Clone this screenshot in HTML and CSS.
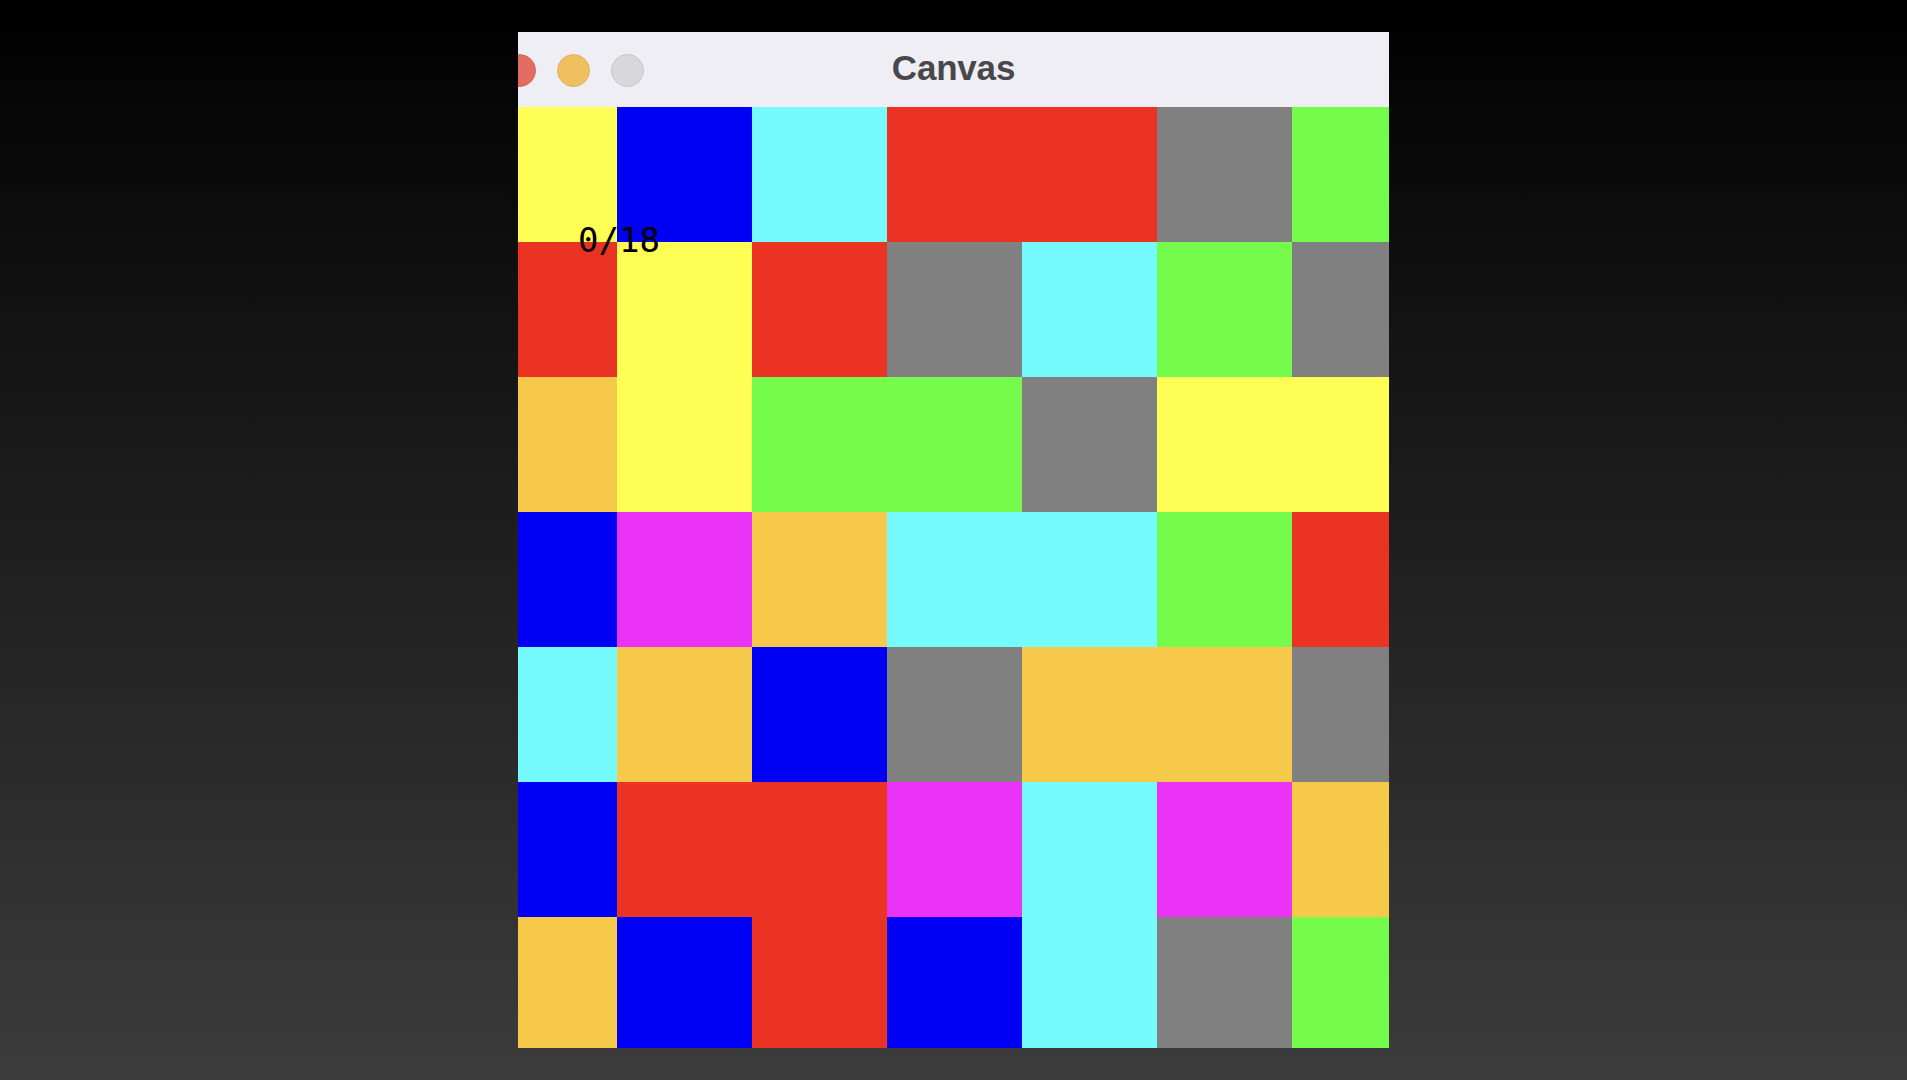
FILE: index.html
```html
<!DOCTYPE html>
<html lang="en">
<head>
<meta charset="utf-8">
<title>Canvas</title>
<link rel="stylesheet" href="styles.css">
</head>
<body>
<div class="window">
  <div class="titlebar">
    <div class="lights">
      <span class="light close"></span>
      <span class="light min"></span>
      <span class="light max"></span>
    </div>
    <div class="title">Canvas</div>
    <div></div>
  </div>
  <div class="canvas">
    <div class="grid">
      <div class="cell y"></div><div class="cell b"></div><div class="cell c"></div><div class="cell r"></div><div class="cell r"></div><div class="cell g"></div><div class="cell l"></div>
      <div class="cell r"></div><div class="cell y"></div><div class="cell r"></div><div class="cell g"></div><div class="cell c"></div><div class="cell l"></div><div class="cell g"></div>
      <div class="cell o"></div><div class="cell y"></div><div class="cell l"></div><div class="cell l"></div><div class="cell g"></div><div class="cell y"></div><div class="cell y"></div>
      <div class="cell b"></div><div class="cell m"></div><div class="cell o"></div><div class="cell c"></div><div class="cell c"></div><div class="cell l"></div><div class="cell r"></div>
      <div class="cell c"></div><div class="cell o"></div><div class="cell b"></div><div class="cell g"></div><div class="cell o"></div><div class="cell o"></div><div class="cell g"></div>
      <div class="cell b"></div><div class="cell r"></div><div class="cell r"></div><div class="cell m"></div><div class="cell c"></div><div class="cell m"></div><div class="cell o"></div>
      <div class="cell o"></div><div class="cell b"></div><div class="cell r"></div><div class="cell b"></div><div class="cell c"></div><div class="cell g"></div><div class="cell l"></div>
    </div>
    <div class="score">0/18</div>
  </div>
</div>
</body>
</html>
```

FILE: styles.css
```css
html, body {
  margin: 0;
  padding: 0;
}
body {
  width: 1907px;
  height: 1080px;
  overflow: hidden;
  background: linear-gradient(180deg, #000000 0%, #161616 35%, #2a2a2a 70%, #3c3c3c 100%);
  padding: 32px 0 0 518px;
  box-sizing: border-box;
  font-family: "Liberation Sans", Arial, sans-serif;
}
.window {
  width: 871px;
  height: 1016px;
  overflow: hidden;
  background: #efeef4;
  display: flex;
  flex-direction: column;
}
.titlebar {
  height: 75px;
  flex: none;
  display: grid;
  grid-template-columns: 1fr auto 1fr;
  align-items: center;
  background: #efeef4;
}
.lights {
  display: flex;
  gap: 21px;
  margin-left: -15px;
  margin-top: 1px;
}
.light {
  width: 33px;
  height: 33px;
  border-radius: 50%;
  box-sizing: border-box;
}
.close { background: #e16c61; border: 1px solid #d2665c; }
.min { background: #efbf5d; border: 1px solid #e0b158; }
.max { background: #d8d7dc; border: 1px solid #c4c3c8; }
.title {
  font-weight: bold;
  font-size: 35px;
  color: #48484a;
  letter-spacing: -0.2px;
  margin-top: -3px;
}
.canvas {
  position: relative;
  flex: 1;
  overflow: hidden;
}
.grid {
  display: grid;
  grid-template-columns: repeat(7, 135px);
  grid-auto-rows: 135px;
  margin-left: -36px;
  width: 945px;
}
.y { background: #fffe54; }
.b { background: #0000f5; }
.c { background: #75fbfd; }
.r { background: #ea3323; }
.g { background: #808080; }
.l { background: #75fb4c; }
.o { background: #f6c94a; }
.m { background: #ea33f7; }
.score {
  position: absolute;
  left: 60px;
  top: 116px;
  font-family: "DejaVu Sans Mono", monospace;
  font-size: 34px;
  line-height: 34px;
  color: #000;
}
```
